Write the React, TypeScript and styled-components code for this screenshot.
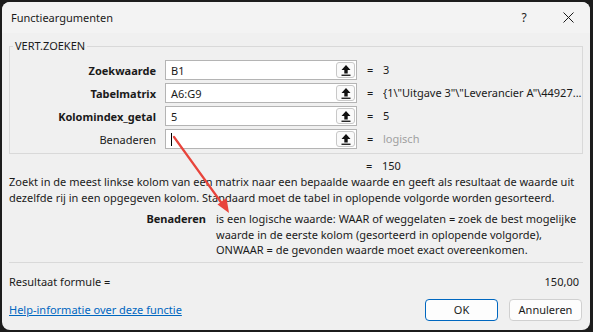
import React from "react";
import styled, { createGlobalStyle } from "styled-components";

const Global = createGlobalStyle`
  html, body { margin: 0; padding: 0; background: #1c1c1c; }
  body { font-family: "Noto Sans", "Open Sans", sans-serif; font-size: 11px; color: #1a1a1a; }
  * { box-sizing: border-box; }
`;

const Window = styled.div`
  position: relative;
  margin: 2px 3px 0 2px;
  height: 328px;
  border-radius: 8px;
  background: #f0f0f0;
  overflow: hidden;
  display: flex;
  flex-direction: column;
`;

const TitleBar = styled.div`
  height: 31px;
  background: #f3f3f3;
  display: flex;
  align-items: center;
  padding: 0 0 0 9px;
  font-size: 11px;
  color: #1a1a1a;
`;

const Title = styled.div`
  flex: 1;
`;

const TitleBtn = styled.div`
  width: 44px;
  height: 31px;
  display: flex;
  align-items: center;
  justify-content: center;
  font-size: 12px;
`;

const Body = styled.div`
  flex: 1;
  padding: 0 7px 0 7px;
  display: flex;
  flex-direction: column;
`;

const Group = styled.fieldset`
  margin: 5px 0 0 0;
  padding: 6px 0 4px 0;
  border: 1px solid #d9d9d9;
  border-radius: 0;
  min-width: 0;
`;

const Legend = styled.legend`
  padding: 0 2px;
  margin-left: 3px;
  line-height: 16px;
  font-size: 11px;
  color: #1a1a1a;
`;

const Rows = styled.div`
  display: flex;
  flex-direction: column;
  gap: 3px;
`;

const Row = styled.div`
  display: grid;
  grid-template-columns: 155px 171px 21px 10px 16px 1fr;
  align-items: center;
  height: 20px;
`;

const Label = styled.div<{ $bold?: boolean }>`
  text-align: right;
  padding-right: 9px;
  font-weight: ${(p) => (p.$bold ? 700 : 400)};
  white-space: nowrap;
`;

const Field = styled.div`
  grid-column: 2;
  height: 20px;
  background: #fff;
  border: 1px solid #b4b4b4;
  border-right: none;
  padding: 0 5px;
  display: flex;
  align-items: center;
  font-size: 11px;
`;

const Caret = styled.span`
  display: inline-block;
  width: 1px;
  height: 13px;
  background: #000;
`;

const PickBtn = styled.div`
  height: 20px;
  background: #fff;
  border: 1px solid #b4b4b4;
  border-left: none;
  display: flex;
  align-items: center;
  justify-content: center;
  position: relative;
  &::before {
    content: "";
    position: absolute;
    inset: 1px 1px 1px 0;
    border: 1px solid #c8c8c8;
    border-radius: 3px;
    background: #fafafa;
  }
  svg { position: relative; }
`;

const Eq = styled.div`
  grid-column: 5;
  line-height: 16px;
`;

const Value = styled.div<{ $muted?: boolean }>`
  color: ${(p) => (p.$muted ? "#a0a0a0" : "#1a1a1a")};
  white-space: nowrap;
  overflow: hidden;
  line-height: 16px;
`;

const ResultRow = styled(Row)`
  margin-top: 4px;
  height: 16px;
`;

const Desc = styled.p`
  margin: 0;
  line-height: 16px;
  white-space: nowrap;
`;

const ArgHelp = styled.div`
  margin-top: 5px;
  display: grid;
  grid-template-columns: 197px 1fr;
  column-gap: 10px;
  line-height: 15.5px;
`;

const ArgName = styled.div`
  font-weight: 700;
  text-align: right;
`;

const ArgText = styled.div`
  white-space: nowrap;
`;

const Separator = styled.hr`
  margin: 4px 0 0 0;
  border: none;
  border-top: 1px solid #d9d9d9;
  height: 0;
`;

const Formula = styled.div`
  margin-top: 11px;
  display: flex;
  justify-content: space-between;
  line-height: 16px;
  padding: 0 4px 0 0;
`;

const Footer = styled.div`
  margin-top: 9px;
  display: flex;
  align-items: center;
  padding-right: 1px;
`;

const HelpLink = styled.a`
  flex: 1;
  color: #0067c0;
  text-decoration: underline;
  cursor: pointer;
`;

const Button = styled.button<{ $primary?: boolean }>`
  width: 73px;
  height: 22px;
  margin-left: 11px;
  font-family: inherit;
  font-size: 11px;
  color: #1a1a1a;
  background: #fdfdfd;
  border: 1px solid ${(p) => (p.$primary ? "#0067c0" : "#d0d0d0")};
  border-radius: 4px;
  padding: 0;
`;

const ArrowOverlay = styled.svg`
  position: absolute;
  left: 0;
  top: 0;
  pointer-events: none;
`;

const UploadIcon = () => (
  <svg width="12" height="13" viewBox="0 0 12 13">
    <path d="M6 1 L1.5 6 H4.3 V9.5 H7.7 V6 H10.5 Z" fill="#111" />
    <rect x="1.5" y="10.6" width="9" height="1.3" fill="#111" />
  </svg>
);

const CloseIcon = () => (
  <svg width="11" height="11" viewBox="0 0 11 11">
    <path d="M0.5 0.5 L10.5 10.5 M10.5 0.5 L0.5 10.5" stroke="#1a1a1a" strokeWidth="1" />
  </svg>
);

type Arg = { label: string; bold?: boolean; input: React.ReactNode; value: string; muted?: boolean };

const args: Arg[] = [
  { label: "Zoekwaarde", bold: true, input: "B1", value: "3" },
  { label: "Tabelmatrix", bold: true, input: "A6:G9", value: '{1\\"Uitgave 3"\\"Leverancier A"\\44927...' },
  { label: "Kolomindex_getal", bold: true, input: "5", value: "5" },
  { label: "Benaderen", input: <Caret />, value: "logisch", muted: true },
];

export default function App() {
  return (
    <>
      <Global />
      <Window>
        <TitleBar>
          <Title>Functieargumenten</Title>
          <TitleBtn>?</TitleBtn>
          <TitleBtn>
            <CloseIcon />
          </TitleBtn>
        </TitleBar>
        <Body>
          <Group>
            <Legend>VERT.ZOEKEN</Legend>
            <Rows>
              {args.map((a) => (
                <Row key={a.label}>
                  <Label $bold={a.bold}>{a.label}</Label>
                  <Field>{a.input}</Field>
                  <PickBtn>
                    <UploadIcon />
                  </PickBtn>
                  <Eq>=</Eq>
                  <Value $muted={a.muted}>{a.value}</Value>
                </Row>
              ))}
            </Rows>
          </Group>
          <ResultRow>
            <Eq>=</Eq>
            <Value>150</Value>
          </ResultRow>
          <Desc>
            Zoekt in de meest linkse kolom van een matrix naar een bepaalde waarde en geeft als resultaat de waarde uit
            <br />
            dezelfde rij in een opgegeven kolom. Standaard moet de tabel in oplopende volgorde worden gesorteerd.
          </Desc>
          <ArgHelp>
            <ArgName>Benaderen</ArgName>
            <ArgText>
              is een logische waarde: WAAR of weggelaten = zoek de best mogelijke
              <br />
              waarde in de eerste kolom (gesorteerd in oplopende volgorde),
              <br />
              ONWAAR = de gevonden waarde moet exact overeenkomen.
            </ArgText>
          </ArgHelp>
          <Separator />
          <Formula>
            <span>Resultaat formule =</span>
            <span>150,00</span>
          </Formula>
          <Footer>
            <HelpLink>Help-informatie over deze functie</HelpLink>
            <Button $primary>OK</Button>
            <Button>Annuleren</Button>
          </Footer>
        </Body>
        <ArrowOverlay width="589" height="328" viewBox="0 0 589 328">
          <line x1="172" y1="135" x2="221" y2="203" stroke="#e8453c" strokeWidth="2.2" strokeLinecap="round" />
          <path d="M227 211 L215.5 202.5 L224.5 196 Z" fill="#e8453c" />
        </ArrowOverlay>
      </Window>
    </>
  );
}
